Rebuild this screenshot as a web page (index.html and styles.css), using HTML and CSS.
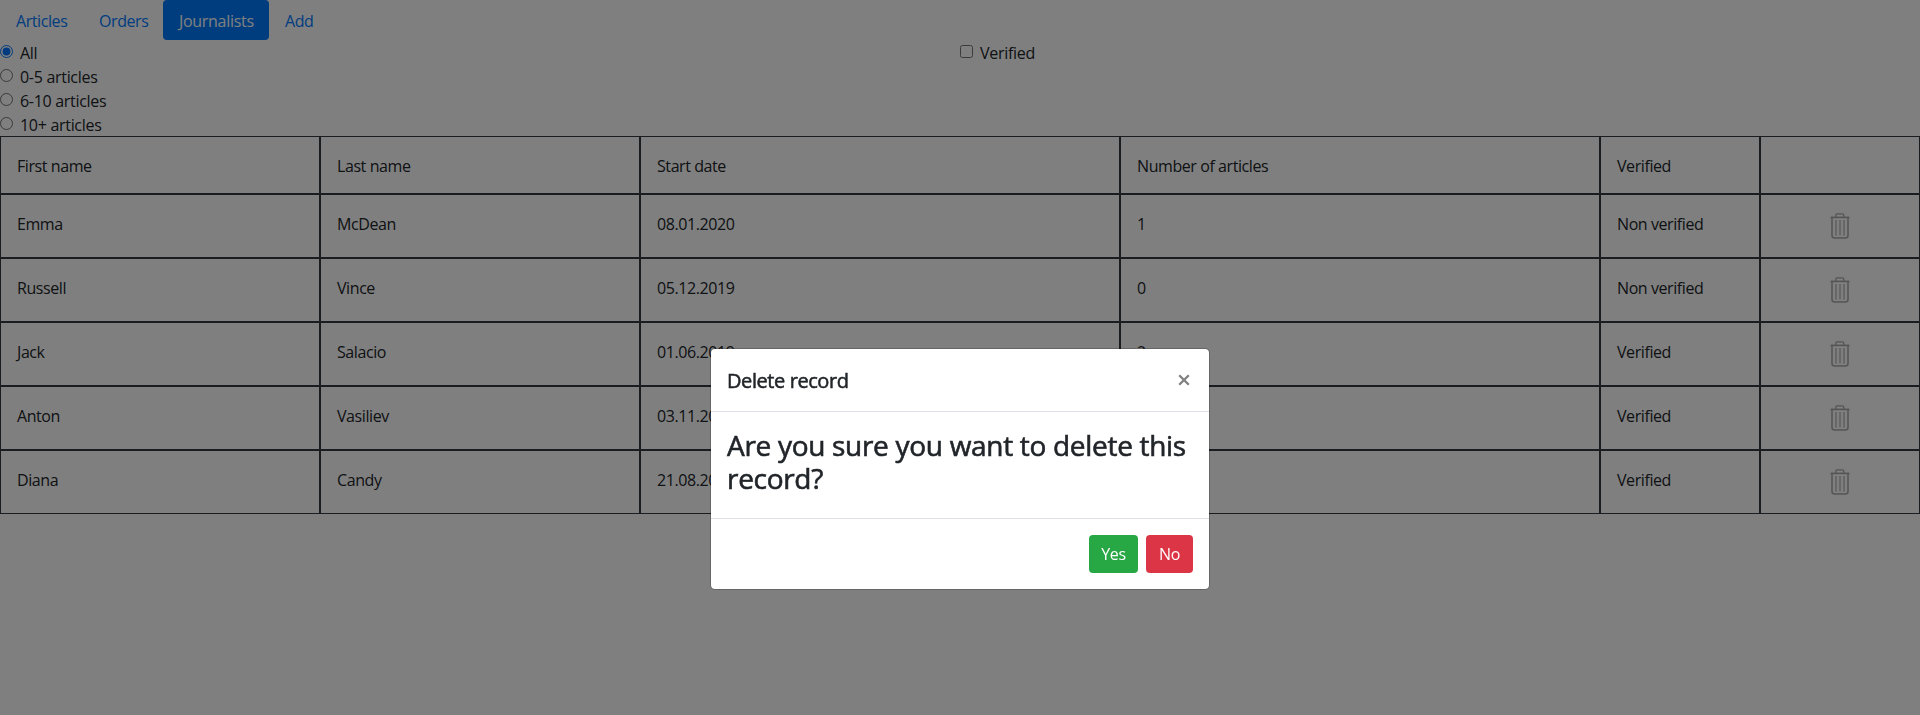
FILE: index.html
```html
<!DOCTYPE html>
<html lang="en">
<head>
<meta charset="utf-8">
<title>Journalists</title>
<link rel="stylesheet" href="styles.css">
</head>
<body>
<svg class="sprite" aria-hidden="true">
  <symbol id="trash" viewBox="0 0 22 28">
    <g fill="none" stroke="currentColor">
      <path d="M1.5 5.4H20.5" stroke-width="1.6"/>
      <path d="M6.8 5V3.2Q6.8 1.8 8.2 1.8H13.4Q14.8 1.8 14.8 3.2V5" stroke-width="1.3"/>
      <path d="M3 5.5V23.5Q3 26 5.5 26H16.5Q19 26 19 23.5V5.5" stroke-width="1.5"/>
      <path d="M7 8V23.5M11 8V23.5M15 8V23.5" stroke-width="1.1"/>
    </g>
  </symbol>
</svg>

<nav class="nav">
  <a class="nav-link nav-articles">Articles</a>
  <a class="nav-link nav-orders">Orders</a>
  <a class="nav-link nav-journalists active">Journalists</a>
  <a class="nav-link nav-add">Add</a>
</nav>

<div class="filters">
  <div class="filter-group">
    <label class="option"><input type="radio" name="count" checked><span>All</span></label>
    <label class="option"><input type="radio" name="count"><span>0-5 articles</span></label>
    <label class="option"><input type="radio" name="count"><span>6-10 articles</span></label>
    <label class="option"><input type="radio" name="count"><span>10+ articles</span></label>
  </div>
  <div class="filter-group">
    <label class="option"><input type="checkbox"><span>Verified</span></label>
  </div>
</div>

<div class="grid">
  <div class="row head"><div>First name</div><div>Last name</div><div>Start date</div><div>Number of articles</div><div>Verified</div><div></div></div>
  <div class="row"><div>Emma</div><div>McDean</div><div>08.01.2020</div><div>1</div><div>Non verified</div><div class="action"><svg class="trash"><use href="#trash"/></svg></div></div>
  <div class="row"><div>Russell</div><div>Vince</div><div>05.12.2019</div><div>0</div><div>Non verified</div><div class="action"><svg class="trash"><use href="#trash"/></svg></div></div>
  <div class="row"><div>Jack</div><div>Salacio</div><div>01.06.2019</div><div>2</div><div>Verified</div><div class="action"><svg class="trash"><use href="#trash"/></svg></div></div>
  <div class="row"><div>Anton</div><div>Vasiliev</div><div>03.11.20</div><div></div><div>Verified</div><div class="action"><svg class="trash"><use href="#trash"/></svg></div></div>
  <div class="row"><div>Diana</div><div>Candy</div><div>21.08.20</div><div></div><div>Verified</div><div class="action"><svg class="trash"><use href="#trash"/></svg></div></div>
</div>

<div class="backdrop">
  <div class="modal" role="dialog">
    <div class="modal-header">
      <h5 class="modal-title">Delete record</h5>
      <button class="close" aria-label="Close"><svg class="close-icon" viewBox="0 0 12 12"><path d="M1.2 1.2L10.8 10.8M10.8 1.2L1.2 10.8"/></svg></button>
    </div>
    <div class="modal-body"><h3 class="question">Are you sure you want to delete this record?</h3></div>
    <div class="modal-footer">
      <button class="btn btn-yes">Yes</button>
      <button class="btn btn-no">No</button>
    </div>
  </div>
</div>
</body>
</html>
```
FILE: styles.css
```css
* { box-sizing: border-box; }

body {
  margin: 0;
  height: 715px;
  overflow: hidden;
  background: #fff;
  color: #212529;
  font: 400 16px/24px "Open Sans", "Noto Sans", sans-serif;
  letter-spacing: -0.42px;
}

.sprite { display: none; }

.nav { display: flex; height: 40px; }
.nav-link {
  padding: 9px 0 7px 16px;
  color: #007bff;
  border-radius: 4px;
  white-space: nowrap;
}
.nav-articles { width: 83px; }
.nav-orders { width: 80px; }
.nav-journalists { width: 106px; letter-spacing: -0.3px; }
.nav-link.active { background: #007bff; color: #fff; }

.filters { display: grid; grid-template-columns: 1fr 1fr; height: 96px; }
.option { display: flex; height: 24px; gap: 7px; letter-spacing: -0.3px; }
.option input { width: 13px; height: 13px; margin: 5px 0 0; }
.option span { padding-top: 1px; }

.row {
  display: grid;
  grid-template-columns: 2fr 2fr 3fr 3fr 1fr 1fr;
  height: 64px;
}
.row.head { height: 58px; }
.row > div { padding: 17px 16px 0; border: 1px solid #343a40; }
.row > .action { display: flex; justify-content: center; }
.trash { width: 22px; height: 28px; color: #a8a8a8; }

.backdrop {
  position: fixed;
  inset: 0;
  display: flex;
  justify-content: center;
  align-items: flex-start;
  padding-top: 348px;
  background: rgba(0, 0, 0, 0.5);
}
.modal {
  width: 500px;
  background: #fff;
  background-clip: padding-box;
  border: 1px solid rgba(0, 0, 0, 0.2);
  border-radius: 5px;
}
.modal-header {
  display: flex;
  justify-content: space-between;
  height: 63px;
  padding: 16px;
  border-bottom: 1px solid #dee2e6;
}
.modal-title {
  margin: 0;
  padding-top: 1px;
  font-size: 20px;
  line-height: 30px;
  font-weight: 400;
  -webkit-text-stroke: 0.5px currentColor;
}
.close { display: flex; align-items: center; width: 15px; height: 30px; padding: 0; border: 0; background: none; }
.close-icon { width: 12px; height: 12px; fill: none; stroke: #808080; stroke-width: 2.3; }
.modal-body { height: 106px; padding: 17px 16px 16px; }
.question {
  margin: 0;
  font-size: 28px;
  line-height: 33px;
  font-weight: 400;
  letter-spacing: -0.3px;
  -webkit-text-stroke: 0.6px currentColor;
}
.modal-footer {
  display: flex;
  justify-content: flex-end;
  gap: 8px;
  padding: 16px;
  border-top: 1px solid #dee2e6;
}
.btn {
  height: 38px;
  padding: 0;
  border: 0;
  border-radius: 4px;
  color: #fff;
  font: inherit;
  letter-spacing: inherit;
}
.btn-yes { width: 49px; background: #28a745; }
.btn-no { width: 47px; background: #dc3545; }
```
